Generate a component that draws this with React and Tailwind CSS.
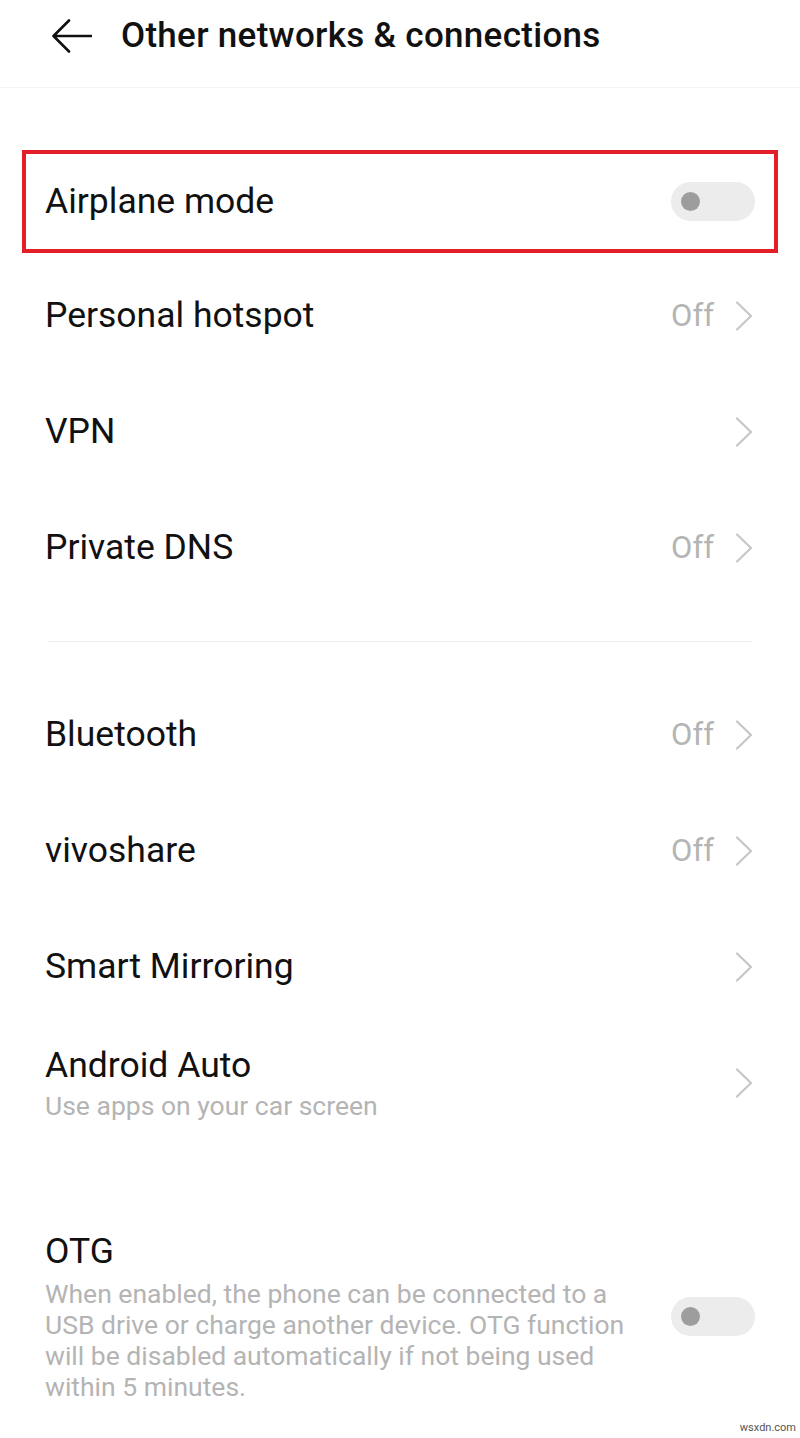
import React from "react";

// --- 小部件 ---
function Chevron() {
  return (
    <svg width="18" height="30" viewBox="0 0 18 30" fill="none" className="shrink-0">
      <polyline points="2,1.5 16,15 2,28.5" stroke="#c6c6c6" strokeWidth="2.2" strokeLinecap="round" strokeLinejoin="round" />
    </svg>
  );
}

function Toggle() {
  return (
    <div className="w-[84px] h-[39px] rounded-full bg-[#ececec] flex items-center pl-[10px] shrink-0">
      <div className="w-[19px] h-[19px] rounded-full bg-[#9d9d9d]" />
    </div>
  );
}

function NavRow({ title, value }) {
  return (
    <div className="h-[116px] flex items-center justify-between pl-[45px] pr-[47px]">
      <span className="text-[35.5px] text-[#111]">{title}</span>
      <div className="flex items-center gap-[21px]">
        {value && <span className="text-[31px] text-[#b4b4b4]">{value}</span>}
        <Chevron />
      </div>
    </div>
  );
}

export default function App() {
  return (
    <div className="w-[800px] min-h-[1438px] bg-white" style={{ fontFamily: "Roboto, 'Noto Sans', sans-serif" }}>
      {/* 顶部标题栏 */}
      <div className="h-[88px] flex items-center border-b border-[#f3f3f3] pb-[15px]">
        <div className="pl-[52px] pr-[29px] flex items-center">
          <svg width="40" height="34" viewBox="0 0 40 34" fill="none">
            <path d="M17 1.5 L1.5 17 L17 32.5 M1.5 17 H39" stroke="#111" strokeWidth="2.6" strokeLinecap="round" strokeLinejoin="round" />
          </svg>
        </div>
        <h1 className="text-[35px] font-medium text-[#111] tracking-[0.3px]">Other networks &amp; connections</h1>
      </div>

      {/* 飞行模式 (红框标注) */}
      <div className="pt-[62px] pb-[5px]">
        <div className="mx-[22px] h-[103px] border-4 border-[#e3202a] flex items-center justify-between pl-[19px] pr-[19px]">
          <span className="text-[35.5px] text-[#111]">Airplane mode</span>
          <Toggle />
        </div>
      </div>

      <NavRow title="Personal hotspot" value="Off" />
      <NavRow title="VPN" />
      <NavRow title="Private DNS" value="Off" />

      <div className="py-[35px] px-[47px]">
        <div className="h-[1px] bg-[#efefef]" />
      </div>

      <NavRow title="Bluetooth" value="Off" />
      <NavRow title="vivoshare" value="Off" />
      <NavRow title="Smart Mirroring" />

      {/* Android Auto */}
      <div className="h-[116px] flex items-center justify-between pl-[45px] pr-[47px]">
        <div className="flex flex-col">
          <span className="text-[35.5px] text-[#111] leading-[40px]">Android Auto</span>
          <span className="text-[26.5px] text-[#b4b4b4] leading-[32px] mt-[5px]">Use apps on your car screen</span>
        </div>
        <Chevron />
      </div>

      {/* OTG */}
      <div className="pt-[90px] flex items-center justify-between pl-[45px] pr-[45px]">
        <div className="flex flex-col w-[600px]">
          <span className="text-[35.5px] text-[#111] leading-[40px]">OTG</span>
          <p className="text-[26.5px] text-[#b4b4b4] leading-[31px] mt-[7px]">
            When enabled, the phone can be connected to a USB drive or charge another device. OTG function will be disabled automatically if not being used within 5 minutes.
          </p>
        </div>
        <Toggle />
      </div>

      <div className="flex justify-end pr-[4px] pt-[18px]">
        <span className="text-[11px] text-[#555]">wsxdn.com</span>
      </div>
    </div>
  );
}
